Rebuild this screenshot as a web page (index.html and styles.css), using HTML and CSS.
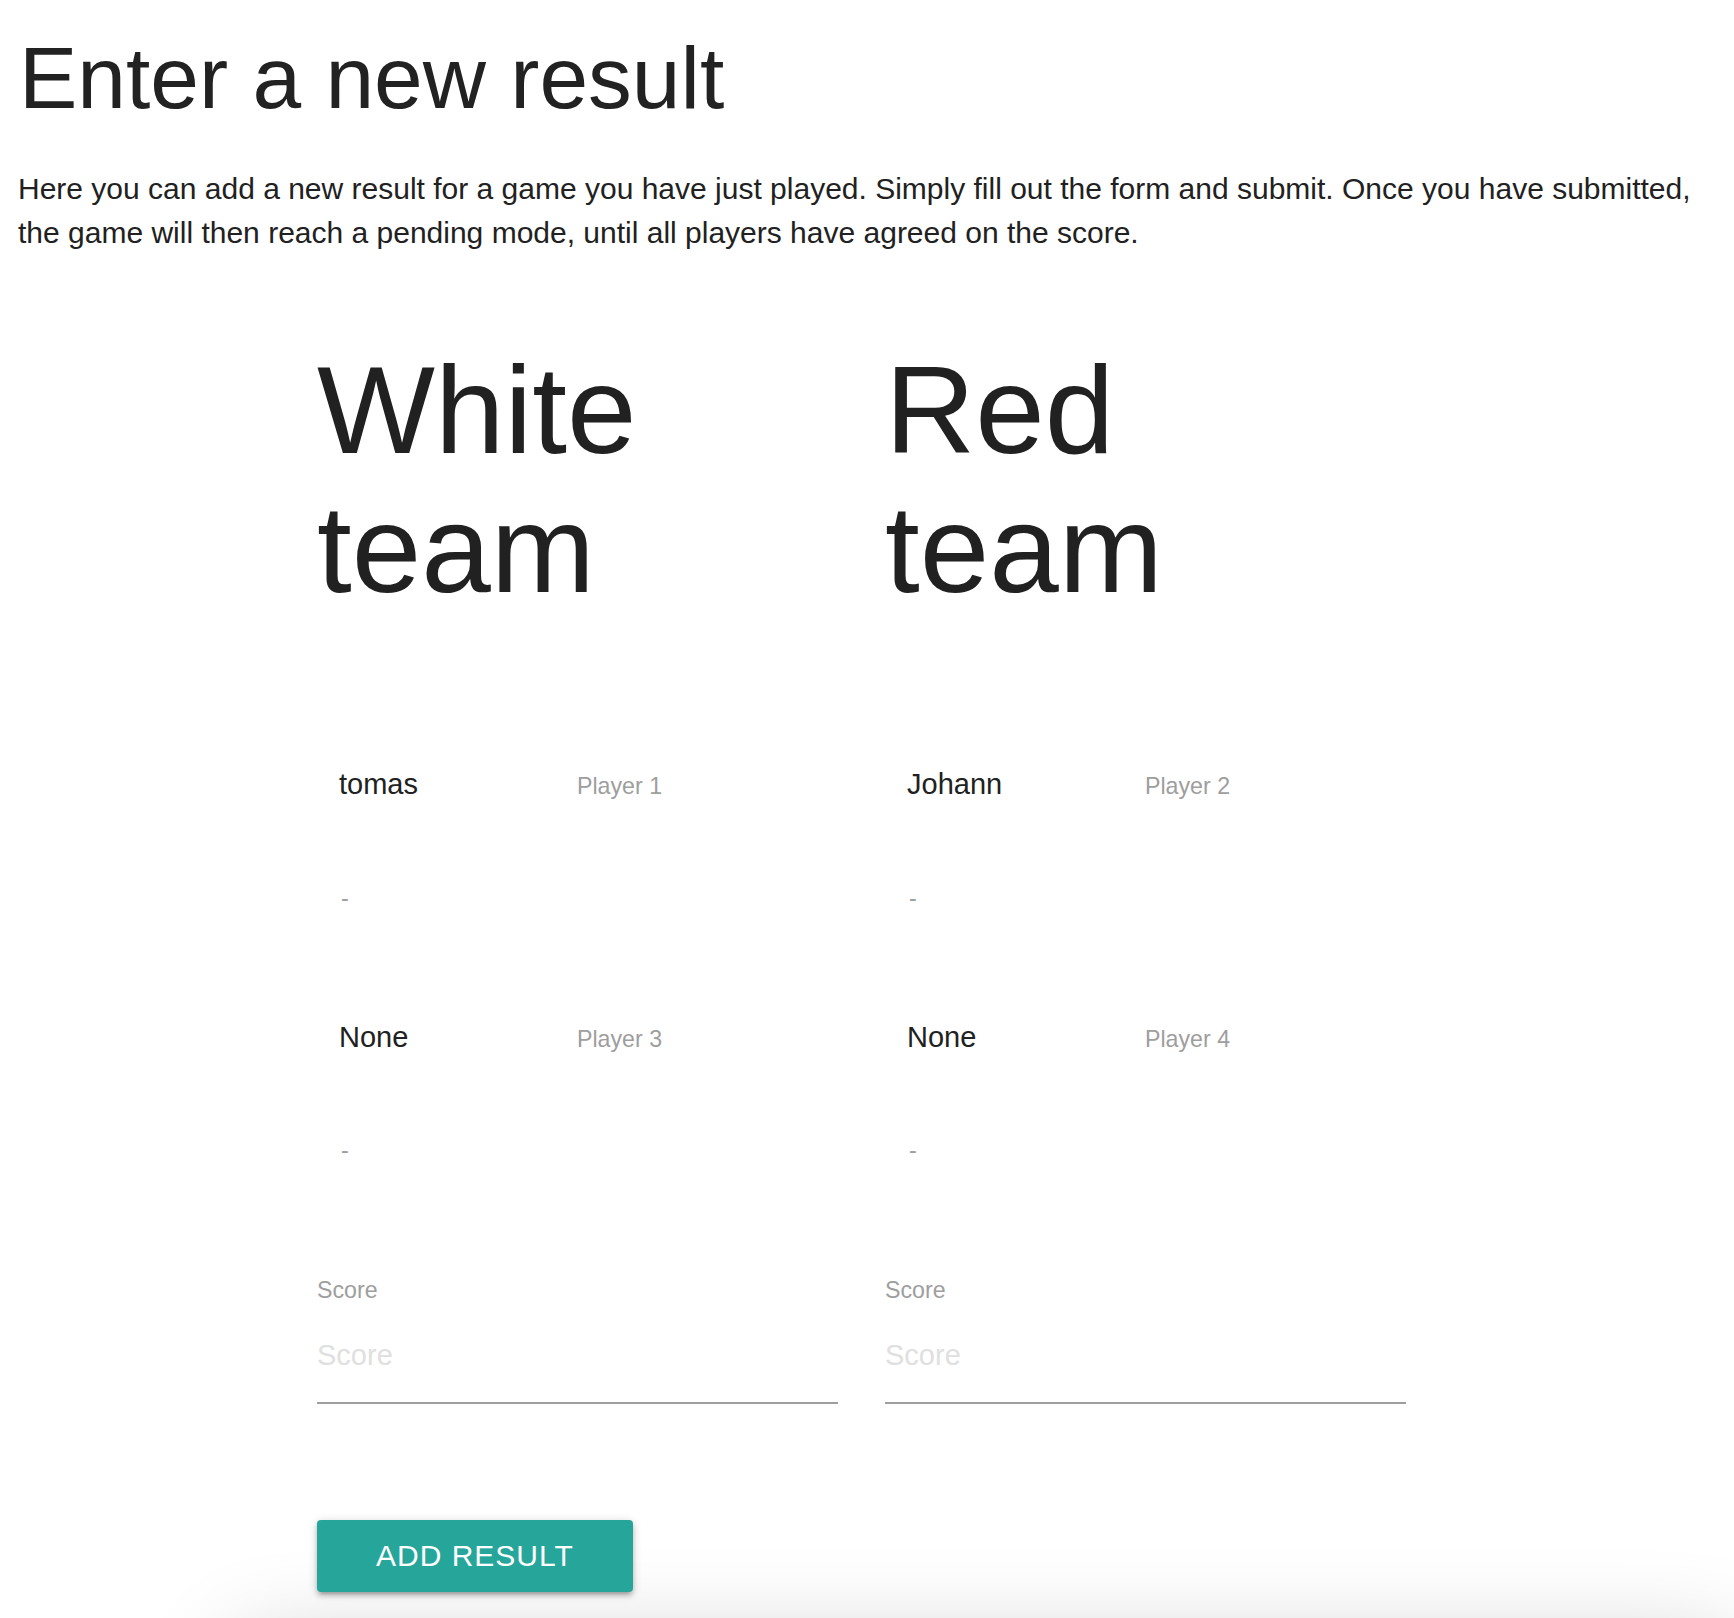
FILE: index.html
```html
<!DOCTYPE html>
<html lang="en">
<head>
<meta charset="utf-8">
<title>Enter a new result</title>
<link rel="stylesheet" href="styles.css">
</head>
<body>
<div class="page">
  <main class="content">
    <h1 class="title">Enter a new result</h1>
    <p class="intro">Here you can add a new result for a game you have just played. Simply fill out the form and submit. Once you have submitted, the game will then reach a pending mode, until all players have agreed on the score.</p>
    <form class="result-form">
      <div class="teams">
        <section class="team">
          <h2 class="team-name">White team</h2>
          <div class="player"><span class="player-name">tomas</span><span class="player-label">Player 1</span></div>
          <div class="player-meta">-</div>
          <div class="player player-second"><span class="player-name">None</span><span class="player-label">Player 3</span></div>
          <div class="player-meta player-meta-second">-</div>
          <div class="score-field">
            <label class="score-label" for="score-white">Score</label>
            <input class="score-input" id="score-white" type="text" placeholder="Score">
          </div>
        </section>
        <section class="team">
          <h2 class="team-name">Red team</h2>
          <div class="player"><span class="player-name">Johann</span><span class="player-label">Player 2</span></div>
          <div class="player-meta">-</div>
          <div class="player player-second"><span class="player-name">None</span><span class="player-label">Player 4</span></div>
          <div class="player-meta player-meta-second">-</div>
          <div class="score-field">
            <label class="score-label" for="score-red">Score</label>
            <input class="score-input" id="score-red" type="text" placeholder="Score">
          </div>
        </section>
      </div>
      <button class="btn" type="submit">ADD RESULT</button>
    </form>
  </main>
  <footer class="page-footer"></footer>
</div>
</body>
</html>
```

FILE: styles.css
```css
html, body {
  margin: 0;
  padding: 0;
  background: #ffffff;
}

body {
  font-family: "Liberation Sans", Arial, Helvetica, sans-serif;
  color: #212121;
}

.page {
  height: 1618px;
  overflow: hidden;
}

.content {
  padding: 0 0 0 17px;
}

.title {
  margin: 27px 0 38px 2px;
  font-size: 87.5px;
  line-height: 102px;
  font-weight: 400;
  color: #222222;
}

.intro {
  margin: 0 16px 0 1px;
  font-size: 30px;
  line-height: 44px;
  color: #212121;
}

.result-form {
  margin: 85px 0 0 300px;
}

.teams {
  display: grid;
  grid-template-columns: 521px 521px;
  column-gap: 47px;
}

.team {
  display: flex;
  flex-direction: column;
}

.team-name {
  margin: 0;
  font-size: 125px;
  line-height: 139px;
  font-weight: 400;
  color: #212121;
}

.player {
  display: grid;
  grid-template-columns: 238px auto;
  align-items: baseline;
  padding-left: 22px;
  margin-top: 144px;
  line-height: 44px;
}

.player-second {
  margin-top: 99px;
}

.player-name {
  font-size: 29px;
  color: #212121;
}

.player-label {
  font-size: 23.2px;
  color: #9e9e9e;
}

.player-meta {
  padding-left: 24px;
  margin-top: 73px;
  font-size: 23.2px;
  line-height: 35px;
  color: #9e9e9e;
}

.player-meta-second {
  margin-top: 72px;
}

.score-field {
  margin-top: 105px;
  display: flex;
  flex-direction: column;
}

.score-label {
  font-size: 23.2px;
  line-height: 35px;
  color: #9e9e9e;
}

.score-input {
  box-sizing: content-box;
  height: 94px;
  width: 100%;
  padding: 0;
  margin: 0;
  border: none;
  border-bottom: 2px solid #9e9e9e;
  outline: none;
  background: transparent;
  font-family: "Liberation Sans", Arial, Helvetica, sans-serif;
  font-size: 29px;
  color: #212121;
}

.score-input::placeholder {
  color: #e0e0e0;
}

.btn {
  margin-top: 116px;
  height: 72px;
  padding: 0 59px;
  border: none;
  border-radius: 4px;
  background: #26a69a;
  color: #ffffff;
  font-family: "Liberation Sans", Arial, Helvetica, sans-serif;
  font-size: 30px;
  letter-spacing: 1px;
  line-height: 72px;
  box-shadow: 0 4px 4px 0 rgba(0, 0, 0, 0.14), 0 6px 2px -4px rgba(0, 0, 0, 0.12), 0 2px 10px 0 rgba(0, 0, 0, 0.2);
  cursor: pointer;
}

.page-footer {
  margin: 59px 0 0 240px;
  height: 200px;
  background: #ffffff;
  box-shadow: 0 0 100px rgba(0, 0, 0, 0.24);
}
```
